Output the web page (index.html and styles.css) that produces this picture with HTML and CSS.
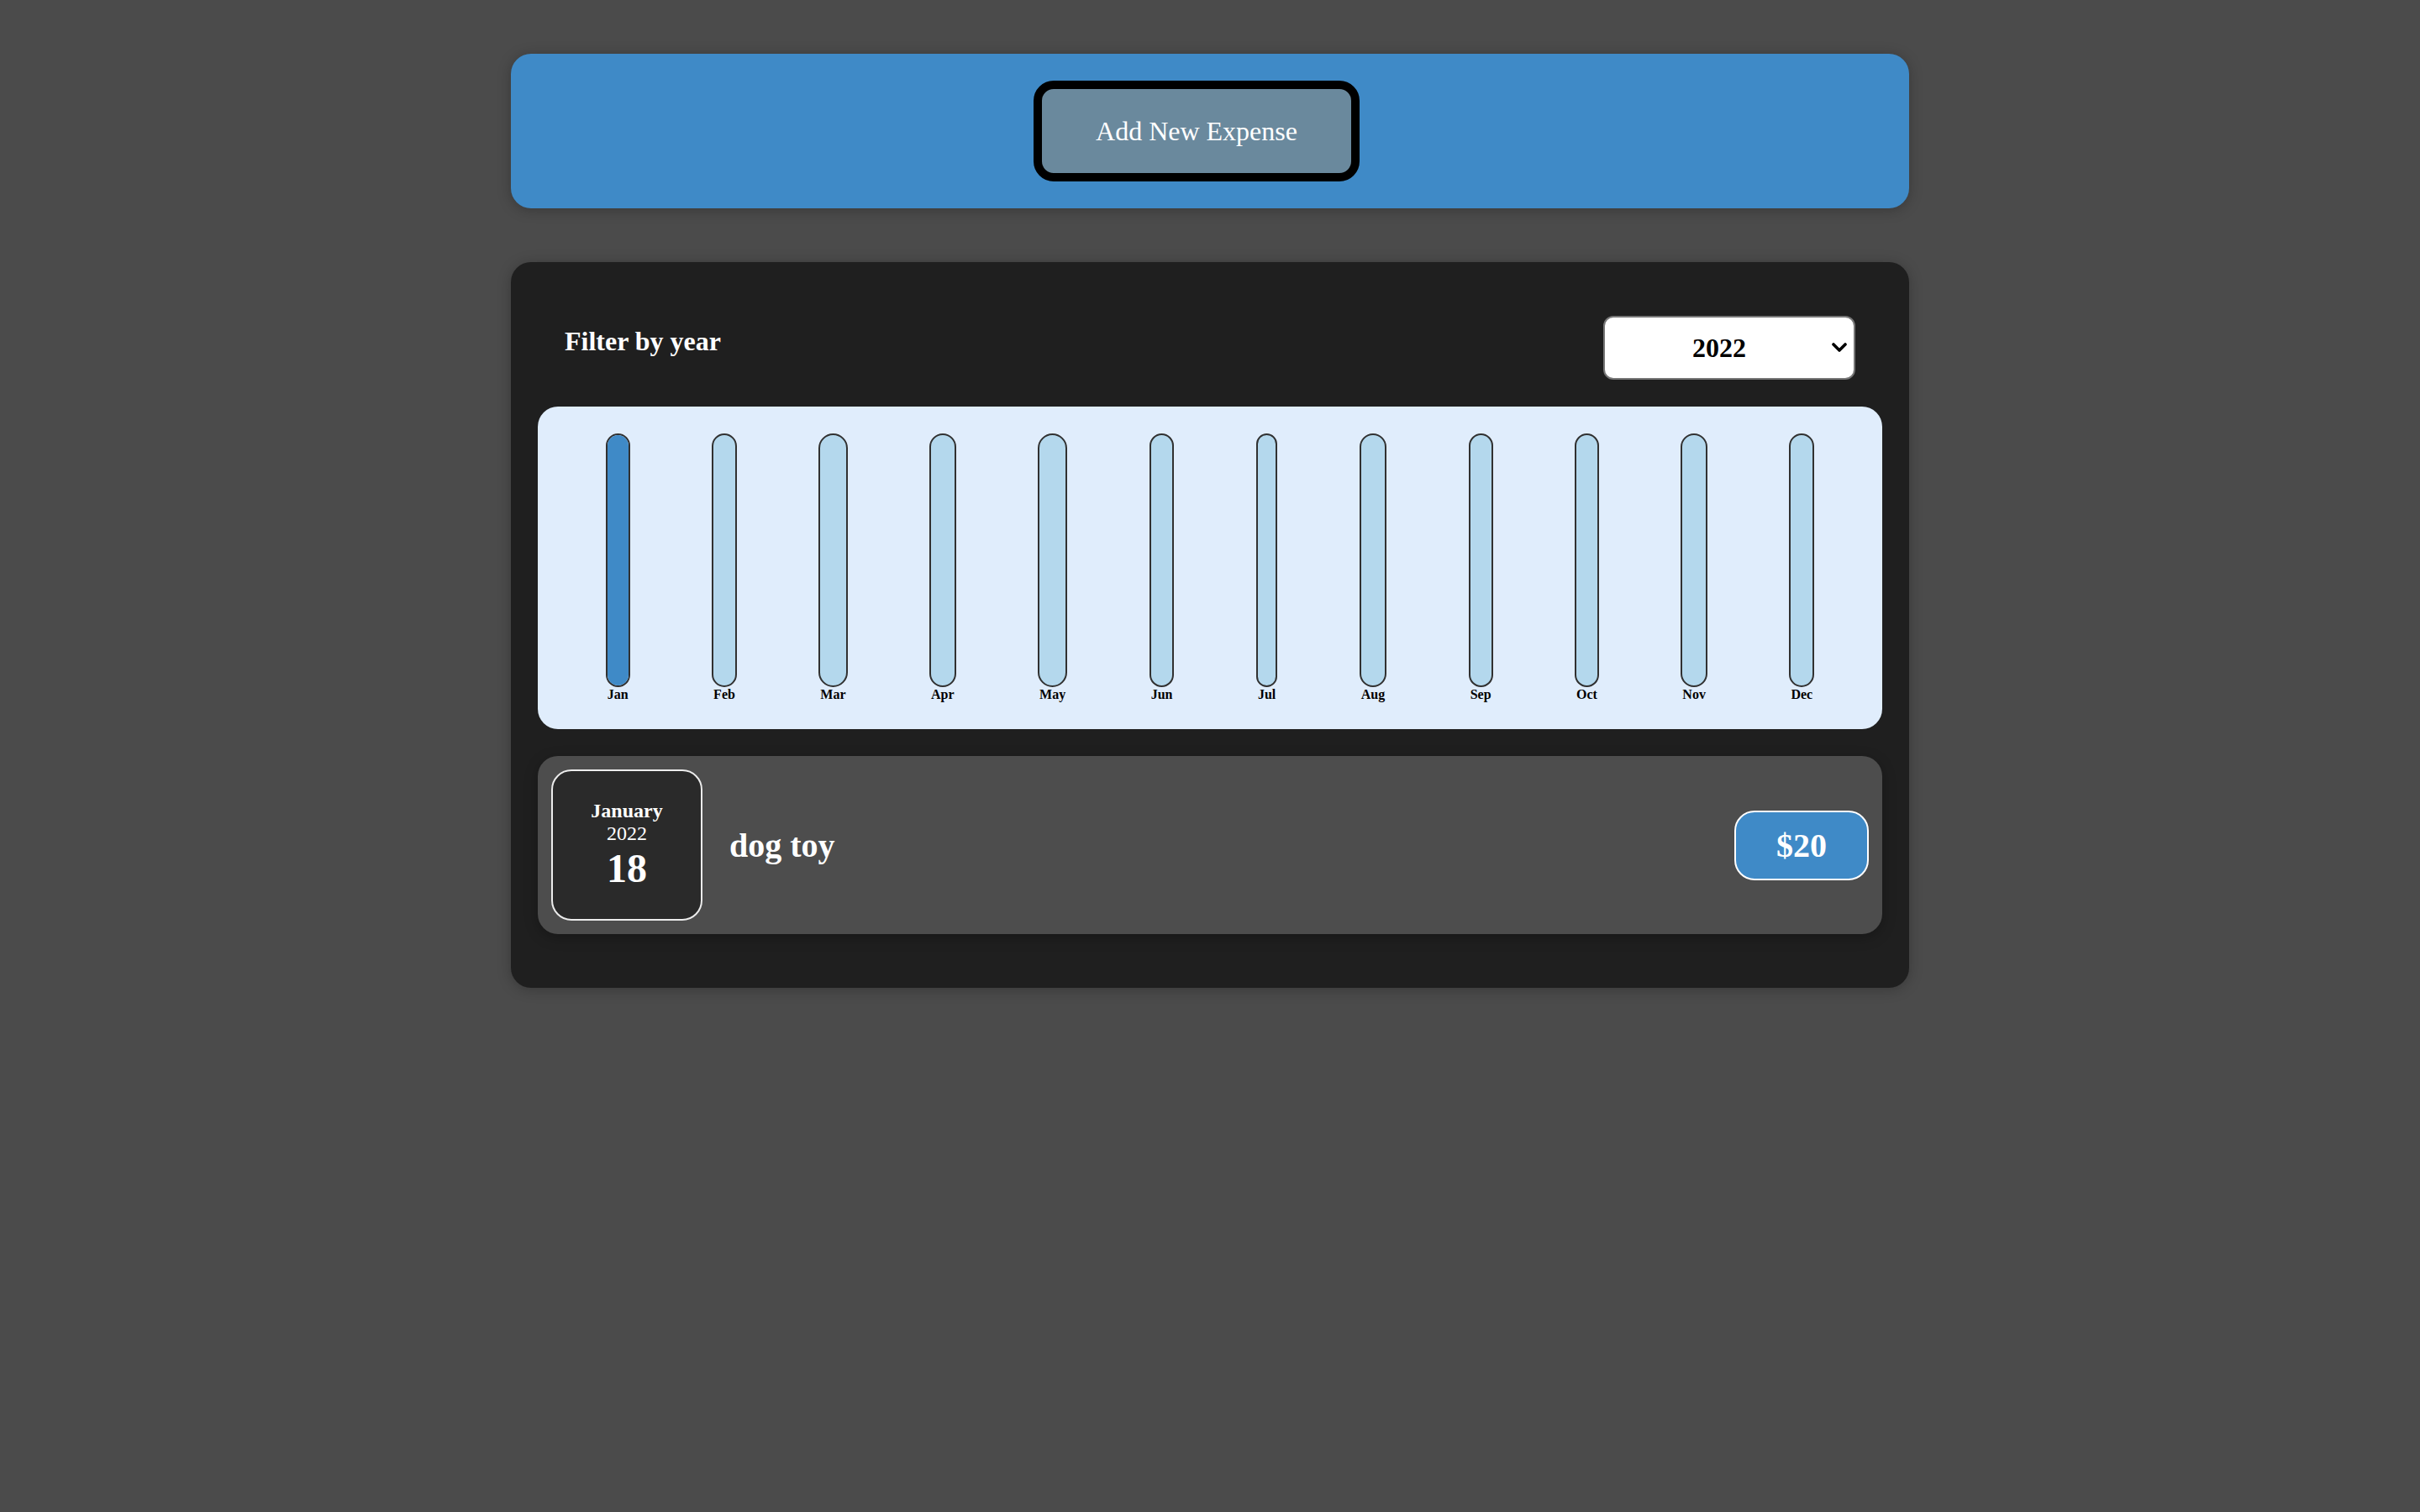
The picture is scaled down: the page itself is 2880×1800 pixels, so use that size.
FILE: index.html
```html
<!DOCTYPE html>
<html lang="en">
<head>
<meta charset="utf-8">
<title>Expenses</title>
<link rel="stylesheet" href="styles.css">
</head>
<body>
<div id="root">
  <div class="new-expense">
    <button class="add-btn" type="button">Add New Expense</button>
  </div>

  <div class="expenses card">
    <div class="expenses-filter">
      <div class="expenses-filter__control">
        <label for="year">Filter by year</label>
        <div class="select-wrap">
          <select id="year" class="year-select">
            <option>2022</option>
            <option>2021</option>
            <option>2020</option>
            <option>2019</option>
          </select>
          <svg class="select-arrow" width="18" height="12" viewBox="0 0 18 12" aria-hidden="true"><path d="M2 2 L9 9 L16 2" fill="none" stroke="#000" stroke-width="3.6" stroke-linecap="round" stroke-linejoin="round"/></svg>
        </div>
      </div>
    </div>

    <div class="chart">
      <div class="chart-bar"><div class="chart-bar__inner"><div class="chart-bar__fill" style="height:100%"></div></div><div class="chart-bar__label">Jan</div></div>
      <div class="chart-bar"><div class="chart-bar__inner"><div class="chart-bar__fill" style="height:0%"></div></div><div class="chart-bar__label">Feb</div></div>
      <div class="chart-bar"><div class="chart-bar__inner"><div class="chart-bar__fill" style="height:0%"></div></div><div class="chart-bar__label">Mar</div></div>
      <div class="chart-bar"><div class="chart-bar__inner"><div class="chart-bar__fill" style="height:0%"></div></div><div class="chart-bar__label">Apr</div></div>
      <div class="chart-bar"><div class="chart-bar__inner"><div class="chart-bar__fill" style="height:0%"></div></div><div class="chart-bar__label">May</div></div>
      <div class="chart-bar"><div class="chart-bar__inner"><div class="chart-bar__fill" style="height:0%"></div></div><div class="chart-bar__label">Jun</div></div>
      <div class="chart-bar"><div class="chart-bar__inner"><div class="chart-bar__fill" style="height:0%"></div></div><div class="chart-bar__label">Jul</div></div>
      <div class="chart-bar"><div class="chart-bar__inner"><div class="chart-bar__fill" style="height:0%"></div></div><div class="chart-bar__label">Aug</div></div>
      <div class="chart-bar"><div class="chart-bar__inner"><div class="chart-bar__fill" style="height:0%"></div></div><div class="chart-bar__label">Sep</div></div>
      <div class="chart-bar"><div class="chart-bar__inner"><div class="chart-bar__fill" style="height:0%"></div></div><div class="chart-bar__label">Oct</div></div>
      <div class="chart-bar"><div class="chart-bar__inner"><div class="chart-bar__fill" style="height:0%"></div></div><div class="chart-bar__label">Nov</div></div>
      <div class="chart-bar"><div class="chart-bar__inner"><div class="chart-bar__fill" style="height:0%"></div></div><div class="chart-bar__label">Dec</div></div>
    </div>

    <ul class="expenses-list">
      <li>
        <div class="expense-item card">
          <div class="expense-date">
            <div class="expense-date__month">January</div>
            <div class="expense-date__year">2022</div>
            <div class="expense-date__day">18</div>
          </div>
          <div class="expense-item__description">
            <h2>dog toy</h2>
            <div class="expense-item__price">$20</div>
          </div>
        </div>
      </li>
    </ul>
  </div>
</div>
</body>
</html>
```

FILE: styles.css
```css
html {
  font-family: "Liberation Serif", "Times New Roman", serif;
  font-size: 32px;
}

body {
  margin: 0;
  background-color: #4b4b4b;
}

.card {
  border-radius: 24px;
  box-shadow: 0 2px 16px rgba(0, 0, 0, 0.25);
}

/* Top panel */
.new-expense {
  background-color: #3f8ac7;
  padding: 32px;
  margin: 64px auto;
  width: 1600px;
  border-radius: 24px;
  text-align: center;
  box-shadow: 0 2px 16px rgba(0, 0, 0, 0.25);
}

.add-btn {
  font: inherit;
  font-size: 32px;
  line-height: 36px;
  cursor: pointer;
  padding: 32px 64px;
  border: 10px solid #000;
  background-color: #6a899d;
  color: #fff;
  border-radius: 24px;
  margin-right: 32px;
}

/* Expenses panel */
.expenses {
  padding: 32px;
  background-color: rgb(31, 31, 31);
  margin: 64px auto;
  width: 1600px;
}

.expenses-filter {
  color: #fff;
  padding: 0 32px;
}

.expenses-filter__control {
  display: flex;
  width: 100%;
  align-items: center;
  justify-content: space-between;
  margin: 32px 0;
}

.expenses-filter label {
  font-weight: bold;
  margin-bottom: 16px;
}

.select-wrap {
  position: relative;
  display: inline-block;
}

.year-select {
  appearance: none;
  -webkit-appearance: none;
  display: block;
  font: inherit;
  font-size: 32px;
  font-weight: bold;
  color: #000;
  background-color: #fff;
  box-sizing: border-box;
  width: 300px;
  height: 76px;
  padding: 0 96px 0 104px;
  border: 2px solid #767676;
  border-radius: 12px;
}

.select-arrow {
  position: absolute;
  right: 10px;
  top: 32px;
  pointer-events: none;
}

/* Chart */
.chart {
  padding: 32px;
  border-radius: 24px;
  background-color: #e0edfc;
  text-align: center;
  display: flex;
  justify-content: space-around;
  height: 320px;
}

.chart-bar {
  height: 100%;
  display: flex;
  flex-direction: column;
  align-items: center;
}

.chart-bar__inner {
  height: 100%;
  width: 100%;
  border: 2px solid #313131;
  border-radius: 24px;
  background-color: #b4d8ed;
  overflow: hidden;
  display: flex;
  flex-direction: column;
  justify-content: flex-end;
}

.chart-bar__fill {
  background-color: #3f8ac7;
  width: 100%;
}

.chart-bar__label {
  font-weight: bold;
  font-size: 16px;
  text-align: center;
  color: #000;
}

/* List */
.expenses-list {
  list-style: none;
  padding: 0;
  margin: 32px 0;
}

.expense-item {
  display: flex;
  justify-content: space-between;
  align-items: center;
  box-shadow: 0 4px 16px rgba(0, 0, 0, 0.25);
  padding: 16px;
  margin: 32px 0;
  border-radius: 24px;
  background-color: #4d4d4d;
}

.expense-date {
  display: flex;
  flex-direction: column;
  width: 176px;
  height: 176px;
  border: 2px solid #ececec;
  background-color: #2a2a2a;
  color: #fff;
  border-radius: 24px;
  align-items: center;
  justify-content: center;
}

.expense-date__month {
  font-size: 24px;
  font-weight: bold;
}

.expense-date__year {
  font-size: 24px;
}

.expense-date__day {
  font-size: 48px;
  font-weight: bold;
}

.expense-item__description {
  display: flex;
  flex-direction: row;
  align-items: center;
  justify-content: flex-start;
  flex: 1;
}

.expense-item__description h2 {
  font-size: 40px;
  flex: 1;
  margin: 0 32px;
  color: #fff;
}

.expense-item__price {
  font-size: 40px;
  font-weight: bold;
  color: #fff;
  background-color: #3f8ac7;
  border: 2px solid #fff;
  padding: 16px 48px;
  border-radius: 24px;
}
```
